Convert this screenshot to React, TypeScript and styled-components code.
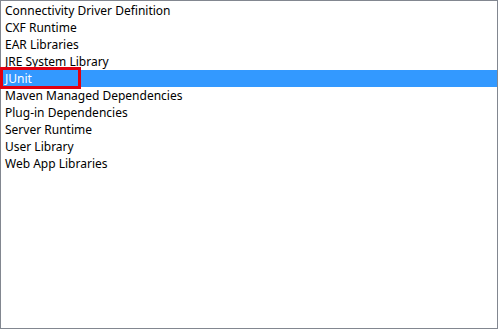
import React from "react";
import styled, { createGlobalStyle } from "styled-components";

const Global = createGlobalStyle`
  html, body { margin: 0; padding: 0; background: #ffffff; }
  body { width: 499px; height: 330px; overflow: hidden; }
`;

const ListBox = styled.div`
  box-sizing: border-box;
  width: 498px;
  height: 329px;
  border: 1px solid #828790;
  background: #ffffff;
  padding-top: 1px;
  display: flex;
  flex-direction: column;
  font-family: "Noto Sans", "Liberation Sans", sans-serif;
  font-size: 12px;
`;

const Row = styled.div<{ $selected?: boolean }>`
  position: relative;
  height: 17px;
  line-height: 17px;
  padding-left: 4px;
  color: ${(p) => (p.$selected ? "#ffffff" : "#000000")};
  background: ${(p) => (p.$selected ? "#3399ff" : "transparent")};
  white-space: nowrap;
`;

const Highlight = styled.span`
  position: absolute;
  left: -1px;
  top: -3px;
  width: 81px;
  height: 22px;
  box-sizing: border-box;
  border: 3px solid #e00010;
  pointer-events: none;
`;

const items = [
  "Connectivity Driver Definition",
  "CXF Runtime",
  "EAR Libraries",
  "JRE System Library",
  "JUnit",
  "Maven Managed Dependencies",
  "Plug-in Dependencies",
  "Server Runtime",
  "User Library",
  "Web App Libraries",
];

export default function App() {
  return (
    <>
      <Global />
      <ListBox>
        {items.map((t) => (
          <Row key={t} $selected={t === "JUnit"}>
            {t}
            {t === "JUnit" && <Highlight />}
          </Row>
        ))}
      </ListBox>
    </>
  );
}
